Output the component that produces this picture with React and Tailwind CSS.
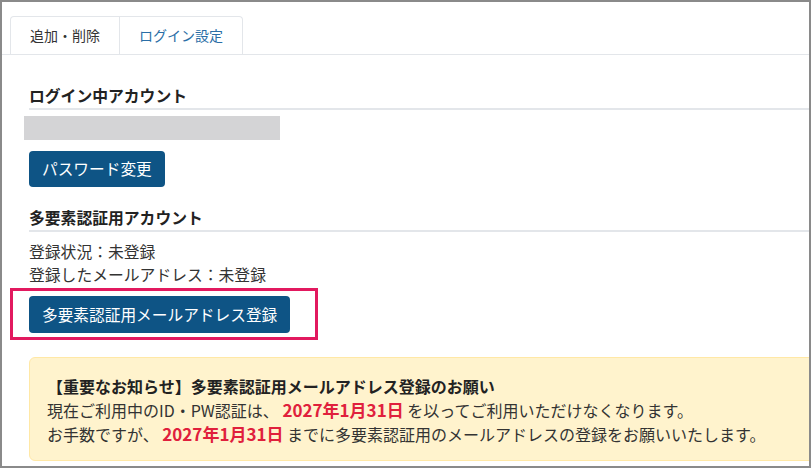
const font = { fontFamily: '"Noto Sans CJK JP", "Noto Sans", sans-serif' };

const SectionTitle = ({ children, className = "" }) => (
  <div className={`border-b-2 border-[#e3e6ea] ${className}`}>
    <h2 className="text-[15.8px] font-bold leading-[22px] text-[#222] pb-[1px]">
      {children}
    </h2>
  </div>
);

const App = () => {
  return (
    <div
      className="w-[811px] h-[468px] bg-white border-2 border-[#8a8a8a] overflow-hidden text-[#333]"
      style={font}
    >
      {/* tabs */}
      <div className="flex pl-[8px] pt-[14px] border-b border-[#e3e6ea]">
        <div className="w-[110px] h-[38px] flex items-center justify-center border border-b-0 border-[#e3e6ea] rounded-tl-[4px] text-[14px] text-[#333]">
          追加・削除
        </div>
        <div className="w-[123px] h-[38px] flex items-center justify-center border border-l-0 border-b-0 border-[#e3e6ea] rounded-tr-[4px] text-[14px] text-[#2a6ea6]">
          ログイン設定
        </div>
      </div>

      <div className="pl-[27px]">
        <SectionTitle className="mt-[30px]">ログイン中アカウント</SectionTitle>
        <div className="ml-[-5px] mt-[6px] w-[256px] h-[24px] bg-[#d4d4d6]" />
        <button className="mt-[11px] h-[36px] px-[13px] rounded-[4px] bg-[#0e5485] text-white text-[15.7px]">
          パスワード変更
        </button>

        <SectionTitle className="mt-[20px]">多要素認証用アカウント</SectionTitle>
        <div className="mt-[8px] text-[15.8px] leading-[23px]">
          <p>登録状況：未登録</p>
          <p>登録したメールアドレス：未登録</p>
        </div>

        <div className="ml-[-19px] mt-[2px] w-[308px] border-[3px] border-[#e2195f] pl-[16px] pt-[5px] pb-[4px]">
          <button className="h-[37px] px-[13px] rounded-[4px] bg-[#0e5485] text-white text-[15.7px]">
            多要素認証用メールアドレス登録
          </button>
        </div>

        <div className="mt-[17px] h-[104px] mr-[-20px] bg-[#fff3cd] border border-[#ffe8a6] rounded-[6px] pl-[17px] pt-[16px] text-[16px] leading-[24px] text-[#333]">
          <p className="font-bold text-[#222]">
            【重要なお知らせ】多要素認証用メールアドレス登録のお願い
          </p>
          <p>
            現在ご利用中のID・PW認証は、{" "}
            <span className="font-bold text-[#e0203c] text-[17px]">2027年1月31日</span>{" "}
            を以ってご利用いただけなくなります。
          </p>
          <p>
            お手数ですが、{" "}
            <span className="font-bold text-[#e0203c] text-[17px]">2027年1月31日</span>{" "}
            までに多要素認証用のメールアドレスの登録をお願いいたします。
          </p>
        </div>
      </div>
    </div>
  );
};

export default App;
